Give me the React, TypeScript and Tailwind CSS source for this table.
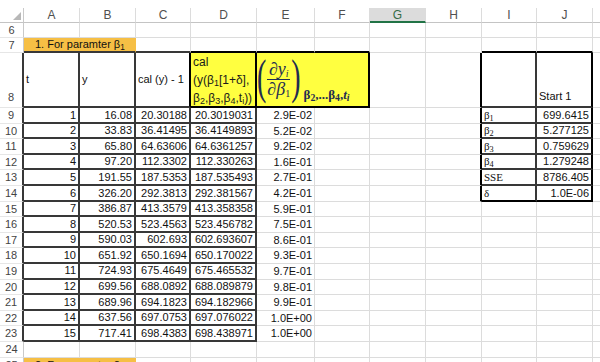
import React from "react";

type Edge = "g" | "d" | "k" | "o" | "h" | "l" | "y" | "n";

const RIGHT: Record<Edge, string> = {
  g: "border-r border-r-[#dcdcdc]",
  d: "border-r-2 border-r-[#383838]",
  k: "border-r-2 border-r-black",
  o: "border-r border-r-[#f6bf45]",
  h: "border-r border-r-[#c9c9c9]",
  l: "border-r border-r-[#e4e4e4]",
  y: "border-r border-r-[#dcdcdc]",
  n: "",
};
const BOTTOM: Record<Edge, string> = {
  g: "border-b border-b-[#dcdcdc]",
  d: "border-b-2 border-b-[#383838]",
  k: "border-b-2 border-b-black",
  o: "border-b border-b-[#f6bf45]",
  h: "border-b border-b-[#c4c4c4]",
  l: "border-b border-b-[#e6e6e6]",
  y: "border-b-2 border-b-[#217346]",
  n: "",
};

type Cell = { w: string; r: Edge; b: Edge; cls?: string; content?: React.ReactNode } | null;

const colW = [
  "w-[24px]",
  "w-[56px]",
  "w-[56px]",
  "w-[55px]",
  "w-[66px]",
  "w-[58px]",
  "w-[55px]",
  "w-[56px]",
  "w-[56px]",
  "w-[55px]",
  "w-[56px]",
  "w-[56px]",
];

const NUM = "justify-end items-center pr-[2px] text-[11px] text-[#111]";
const LEFT = "justify-start items-center pl-[2px] text-[11px] text-[#111]";

function baseRow(label: string, hdrCls = "items-center justify-center"): Cell[] {
  const cells: Cell[] = [
    { w: colW[0], r: "h", b: "l", cls: `${hdrCls} text-[11px] text-[#444]`, content: label },
  ];
  for (let c = 1; c < 12; c++) cells.push({ w: colW[c], r: "g", b: "g" });
  return cells;
}

const data: [string, string, string, string, string][] = [
  ["1", "16.08", "20.30188", "20.3019031", "2.9E-02"],
  ["2", "33.83", "36.41495", "36.4149893", "5.2E-02"],
  ["3", "65.80", "64.63606", "64.6361257", "9.2E-02"],
  ["4", "97.20", "112.3302", "112.330263", "1.6E-01"],
  ["5", "191.55", "187.5353", "187.535493", "2.7E-01"],
  ["6", "326.20", "292.3813", "292.381567", "4.2E-01"],
  ["7", "386.87", "413.3579", "413.358358", "5.9E-01"],
  ["8", "520.53", "523.4563", "523.456782", "7.5E-01"],
  ["9", "590.03", "602.693", "602.693607", "8.6E-01"],
  ["10", "651.92", "650.1694", "650.170022", "9.3E-01"],
  ["11", "724.93", "675.4649", "675.465532", "9.7E-01"],
  ["12", "699.56", "688.0892", "688.089879", "9.8E-01"],
  ["13", "689.96", "694.1823", "694.182966", "9.9E-01"],
  ["14", "637.56", "697.0753", "697.076022", "1.0E+00"],
  ["15", "717.41", "698.4383", "698.438971", "1.0E+00"],
];

const params: [React.ReactNode, string][] = [
  [<>β<sub>1</sub></>, "699.6415"],
  [<>β<sub>2</sub></>, "5.277125"],
  [<>β<sub>3</sub></>, "0.759629"],
  [<>β<sub>4</sub></>, "1.279248"],
  [<>SSE</>, "8786.405"],
  [<>δ</>, "1.0E-06"],
];

function Row({ h, cells }: { h: string; cells: Cell[] }) {
  return (
    <div className={`flex shrink-0 ${h}`}>
      {cells.map((c, i) =>
        c ? (
          <div
            key={i}
            className={`flex shrink-0 h-full whitespace-nowrap ${c.w} ${RIGHT[c.r]} ${BOTTOM[c.b]} ${c.cls ?? ""}`}
          >
            {c.content}
          </div>
        ) : null
      )}
    </div>
  );
}

function MathCell() {
  return (
    <div className="flex items-end h-full w-full font-['Liberation_Serif',serif] text-[#1f2d50]">
      <div className="flex items-center h-full">
        <span className="inline-block text-[28px] leading-[30px] scale-y-[1.7] -mt-[3px]">(</span>
        <div className="flex flex-col items-center mx-[1px] -mt-[2px]">
          <span className="italic text-[18px] leading-[19px]">
            ∂y<sub className="text-[10px]">i</sub>
          </span>
          <span className="block h-px w-full bg-[#1f2d50]"></span>
          <span className="italic text-[18px] leading-[18px]">
            ∂β<sub className="text-[10px] not-italic">1</sub>
          </span>
        </div>
        <span className="inline-block text-[28px] leading-[30px] scale-y-[1.7] -mt-[3px]">)</span>
      </div>
      <span className="pb-[5px] pl-[3px] text-[13px] leading-none font-bold">
        β<sub>2</sub>,...β<sub>4</sub>,<span className="italic">t</span>
        <sub className="italic">i</sub>
      </span>
    </div>
  );
}

export default function App() {
  const header: Cell[] = [
    {
      w: colW[0],
      r: "h",
      b: "h",
      cls: "justify-end items-end pr-[2px] pb-[2px]",
      content: (
        <svg width="8" height="8" viewBox="0 0 8 8">
          <polygon points="8,0 8,8 0,8" fill="#b8b8b8" />
        </svg>
      ),
    },
  ];
  "ABCDEFGHIJ".split("").forEach((L, i) => {
    const c = i + 1;
    header.push({
      w: colW[c],
      r: "g",
      b: L === "G" ? "y" : "h",
      cls:
        L === "G"
          ? "items-center justify-center text-[12px] text-[#356b45] bg-[#dcdcdc]"
          : "items-center justify-center text-[12px] text-[#505050]",
      content: L,
    });
  });
  header.push({ w: colW[11], r: "g", b: "h" });

  const row6 = baseRow("6");

  const row7 = baseRow("7");
  row7[1] = {
    w: "w-[112px]",
    r: "o",
    b: "d",
    cls: "bg-[#f6bf45] items-center pl-[11px] text-[11px] text-[#111]",
    content: (
      <span>
        1. For paramter β<sub>1</sub>
      </span>
    ),
  };
  row7[2] = null;
  row7[3]!.b = "d";
  row7[4]!.b = "k";
  row7[5]!.b = "k";
  row7[6]!.b = "k";
  row7[9]!.b = "k";
  row7[10]!.b = "k";

  const row8 = baseRow("8", "items-end justify-center pb-[2px]");
  row8[0]!.r = "d";
  row8[1] = { w: colW[1], r: "d", b: "d", cls: LEFT, content: "t" };
  row8[2] = { w: colW[2], r: "d", b: "d", cls: LEFT, content: "y" };
  row8[3] = { w: colW[3], r: "k", b: "d", cls: LEFT, content: "cal (y) - 1" };
  row8[4] = {
    w: colW[4],
    r: "k",
    b: "k",
    cls: "bg-[#ffff40] items-start",
    content: (
      <div className="flex flex-col pl-[2px] text-[12px] leading-[18px] text-[#1a1a1a]">
        <span>cal</span>
        <span>
          (y(β<sub>1</sub>[1+δ],
        </span>
        <span>
          β<sub>2</sub>,β<sub>3</sub>,β<sub>4</sub>,t<sub>i</sub>))
        </span>
      </div>
    ),
  };
  row8[5] = { w: "w-[113px]", r: "k", b: "k", cls: "bg-[#ffff40]", content: <MathCell /> };
  row8[6] = null;
  row8[8]!.r = "k";
  row8[9] = { w: colW[9], r: "d", b: "d" };
  row8[10] = {
    w: colW[10],
    r: "k",
    b: "d",
    cls: "items-end pl-[2px] pb-[2px] text-[11px] text-[#111]",
    content: "Start 1",
  };

  const dataRows = data.map((d, i) => {
    const n = 9 + i;
    const row = baseRow(String(n));
    row[0]!.r = "d";
    row[1] = { w: colW[1], r: "d", b: "d", cls: NUM, content: d[0] };
    row[2] = { w: colW[2], r: "d", b: "d", cls: NUM, content: d[1] };
    row[3] = { w: colW[3], r: "d", b: "d", cls: NUM, content: d[2] };
    row[4] = { w: colW[4], r: "d", b: "d", cls: NUM, content: d[3] };
    row[5] = { w: colW[5], r: "g", b: "g", cls: NUM, content: d[4] };
    if (i < params.length) {
      const last = i === params.length - 1;
      row[8]!.r = "k";
      row[9] = {
        w: colW[9],
        r: "d",
        b: last ? "k" : "d",
        cls: "items-center pl-[2px] text-[11px] text-[#111] font-['Liberation_Serif',serif]",
        content: <span>{params[i][0]}</span>,
      };
      row[10] = { w: colW[10], r: "k", b: last ? "k" : "d", cls: NUM, content: params[i][1] };
    }
    return row;
  });

  const row24 = baseRow("24");
  const row25 = baseRow("25");
  row25[1] = {
    w: "w-[112px]",
    r: "o",
    b: "o",
    cls: "bg-[#f6bf45] items-center pl-[11px] text-[11px] text-[#111]",
    content: (
      <span>
        2. For paramter β<sub>2</sub>
      </span>
    ),
  };
  row25[2] = null;

  return (
    <div className="w-[600px] h-[362px] overflow-hidden bg-white flex flex-col font-['Liberation_Sans',Arial,sans-serif] text-[#111]">
      <div className="h-[8px] shrink-0" />
      <Row h="h-[15px]" cells={header} />
      <Row h="h-[15px]" cells={row6} />
      <Row h="h-[15px]" cells={row7} />
      <Row h="h-[55px]" cells={row8} />
      {dataRows.map((r, i) => (
        <Row key={i} h="h-[15.6px]" cells={r} />
      ))}
      <Row h="h-[15.6px]" cells={row24} />
      <Row h="h-[15.6px]" cells={row25} />
    </div>
  );
}
